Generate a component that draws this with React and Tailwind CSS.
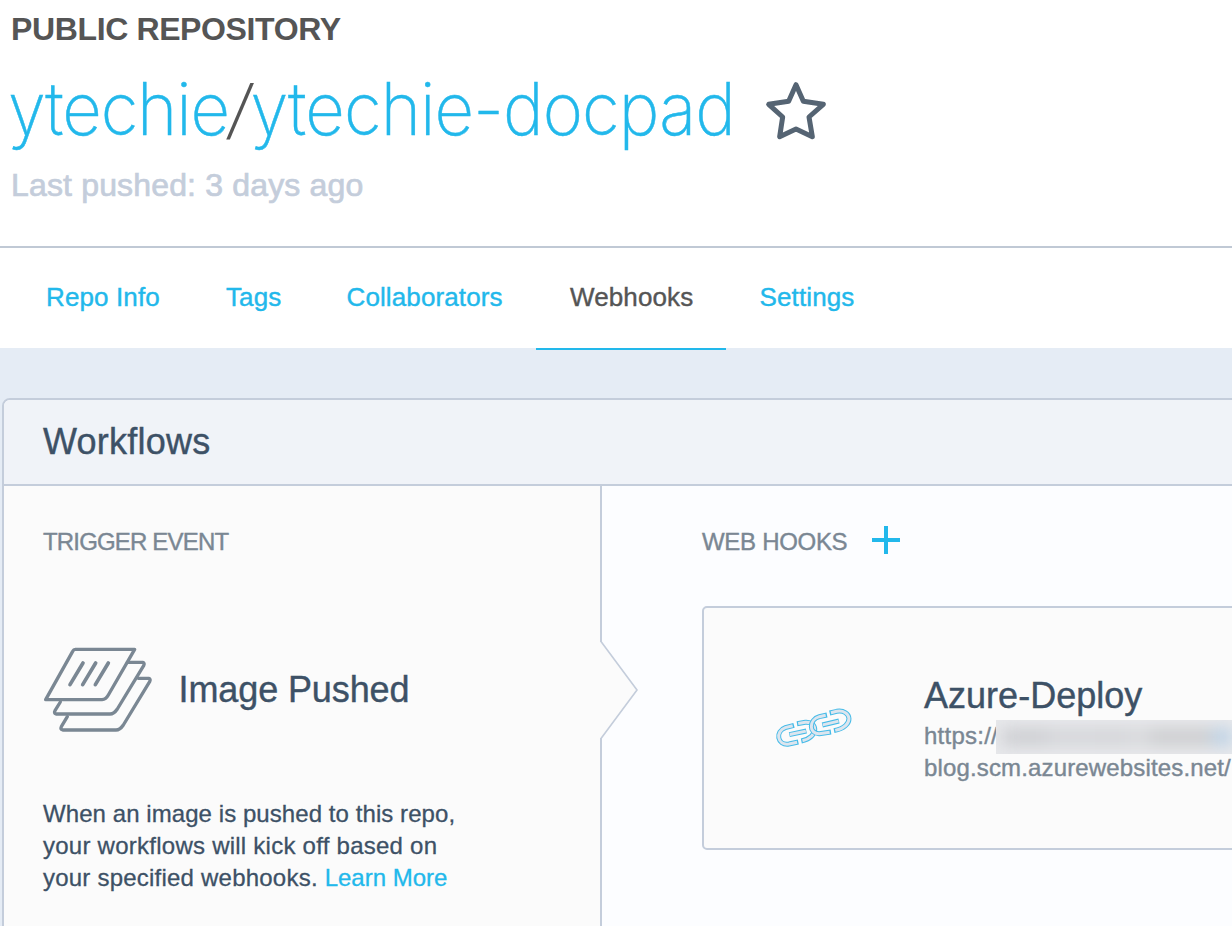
const tabs = [
  { label: "Repo Info", width: "w-[180px]" },
  { label: "Tags", width: "w-[120.5px]" },
  { label: "Collaborators", width: "w-[223px]" },
  { label: "Webhooks", width: "w-[190px]", active: true },
  { label: "Settings", width: "w-[162px]" },
];

function StarIcon() {
  return (
    <svg className="h-[62px] w-[62px] shrink-0" viewBox="0 0 186 186" fill="none" stroke="#556473" strokeWidth="15" strokeLinejoin="round">
      <path d="M93 17 L115 67 L175 76 L132 114 L142 173 L93 150 L44 173 L53 114 L11 76 L71 67 Z" />
    </svg>
  );
}

function ImageStackIcon() {
  return (
    <svg className="h-[86px] w-[110px] shrink-0" viewBox="39 411 330 258" fill="none" stroke="#7a8793" strokeWidth="10" strokeLinecap="round" strokeLinejoin="round">
      <path d="M136 418 H314 L235 555 Q228 568 216 569 H47 L128 424 Q131 418 136 418 Z" />
      <path d="M292 457 H338 Q345 459 341 467 L262 597 Q252 612 240 612 H78 Q71 610 75 602 L91 576" />
      <path d="M325 505 H356 Q363 507 359 515 L280 645 Q270 660 258 660 H98 Q90 658 94 650 L112 620" />
      <path d="M159 459 L120 524 M197 459 L158 524 M235 459 L196 524" strokeWidth="11" />
    </svg>
  );
}

const chainParts = [
  "M111 101 L136 97 C173 94 178 142 124 153",
  "M102 106 L76 113 C45 124 51 167 87 162 L115 156",
  "M88 134 L139 123",
  "M201 75 L178 80 C146 89 146 132 178 131 L213 126",
  "M187 105 L237 93",
  "M209 69 L230 64 C274 57 287 109 222 122",
];

function ChainIcon() {
  return (
    <svg className="h-[41px] w-[78px] shrink-0" viewBox="45 51 234 123" fill="none">
      {chainParts.map((d) => (
        <g key={d}>
          <path d={d} stroke="#45bbe8" strokeWidth="15" />
          <path d={d} stroke="#dde5ee" strokeWidth="9" pathLength="100" strokeDasharray="0 3 94 3" />
        </g>
      ))}
    </svg>
  );
}

export default function App() {
  return (
    <div className="flex h-[926px] w-full flex-col overflow-hidden bg-[#e5ecf5] font-['Liberation_Sans',Arial,sans-serif]">
      <header className="h-[248px] shrink-0 border-b-2 border-[#c0c9d5] bg-white pt-[11px] pl-[11px]">
        <div className="text-[32px]/[36px] font-bold tracking-[-0.37px] text-[#555]">PUBLIC REPOSITORY</div>
        <div className="mt-[18px] flex h-[90px] items-center">
          <h1 className="-ml-[3px] w-[757px] origin-left scale-x-[0.94] pb-[2px] font-['Inter',sans-serif] text-[73px]/[90px] font-[190] whitespace-nowrap text-[#22b8eb]">
            <a className="tracking-[-1.2px] [-webkit-text-stroke:0.5px_#22b8eb]">ytechie</a>
            <span className="-mr-[4px] -ml-[2px] inline-block -skew-x-[4deg] font-['Roboto',sans-serif] font-[300] text-[#555]">/</span>
            <a className="tracking-[-0.9px] [-webkit-text-stroke:0.5px_#22b8eb]">ytechie-docpad</a>
          </h1>
          <StarIcon />
        </div>
        <div className="mt-[10px] text-[32px]/[40px] tracking-[0.16px] text-[#c4cddb] [-webkit-text-stroke:0.7px_#c4cddb]">Last pushed: 3 days ago</div>
      </header>

      <nav className="flex h-[100px] shrink-0 bg-white pl-[12.5px] text-[26px]/[28px] tracking-[0.12px] whitespace-nowrap">
        {tabs.map((tab) => (
          <a key={tab.label} className={`${tab.width} flex items-center pb-[2px] ${tab.active ? "h-[102px] border-b-2 border-[#22b8eb] pl-[34px] text-[#555] [-webkit-text-stroke:0.4px_#555]" : "h-[100px] pl-[33.5px] text-[#22b8eb] [-webkit-text-stroke:0.4px_#22b8eb]"}`}>
            {tab.label}
          </a>
        ))}
      </nav>

      <main className="flex flex-1 pt-[50px] pl-[2px]">
        <section className="flex h-[600px] w-[1260px] shrink-0 flex-col overflow-hidden rounded-lg border-2 border-[#c4cddb] bg-[#fcfdff] text-[#3d5166]">
          <h2 className="flex h-[86px] shrink-0 items-center border-b-2 border-[#c4cddb] bg-[#f0f3f8] pl-[39px] text-[36px]/[40px] tracking-[0.25px] [-webkit-text-stroke:0.4px_#3d5166]">Workflows</h2>
          <div className="flex flex-1">
            <div className="relative w-[598px] shrink-0 border-r-2 border-[#c4cddb] bg-[#fbfbfb] pt-[42px] pl-[39px]">
              <h3 className="text-[24px]/[28px] tracking-[-0.83px] text-[#7a8793] [-webkit-text-stroke:0.4px_#7a8793]">TRIGGER EVENT</h3>
              <div className="mt-[91px] flex items-center">
                <ImageStackIcon />
                <span className="pl-[25.5px] text-[36px]/[40px] tracking-[-0.1px] [-webkit-text-stroke:0.4px_#3d5166]">Image Pushed</span>
              </div>
              <p className="mt-[65px] text-[24px]/[32px] whitespace-nowrap [-webkit-text-stroke:0.3px]">
                <span className="tracking-[0.07px]">When an image is pushed to this repo,</span>
                <br />
                <span className="tracking-[0.25px]">your workflows will kick off based on</span>
                <br />
                <span className="tracking-[0.22px]">your specified webhooks. </span>
                <a className="text-[#22b8eb]">Learn More</a>
              </p>
              <svg className="absolute top-[154px] left-[595px] h-[100px] w-[40px]" viewBox="0 0 40 100" fill="none">
                <path d="M0 2 H2 L38 50 L2 98 H0 Z" fill="#fbfbfb" />
                <path d="M2 1.5 L38 50 L2 98.5" stroke="#c4cddb" strokeWidth="1.6" />
              </svg>
            </div>
            <div className="flex-1 pt-[40px] pl-[100px]">
              <div className="flex h-7 items-center">
                <h3 className="w-[170px] pt-[3px] text-[24px]/[28px] tracking-[-0.3px] text-[#7a8793] [-webkit-text-stroke:0.4px_#7a8793]">WEB HOOKS</h3>
                <svg className="size-7" viewBox="0 0 28 28" fill="#22b8eb">
                  <path d="M12 0 H16 V12 H28 V16 H16 V28 H12 V16 H0 V12 H12 Z" />
                </svg>
              </div>
              <div className="mt-[52px] flex h-[244px] w-[600px] items-start rounded-[5px] border-2 border-[#c4cddb] bg-[#fbfbfb] pl-[71px]">
                <div className="pt-[99px]">
                  <ChainIcon />
                </div>
                <div className="pt-[66px] pl-[71px]">
                  <h4 className="text-[36px]/[44px] tracking-[0.02px] [-webkit-text-stroke:0.4px_#3d5166]">Azure-Deploy</h4>
                  <div className="pt-[2px] text-[24px]/[32px] text-[#7a8793] [-webkit-text-stroke:0.4px_#7a8793]">
                    <div className="flex h-[32px]">
                      <span className="w-[72px] tracking-[0.25px] whitespace-nowrap">https://</span>
                      <span className="relative h-[34px] w-[236px] overflow-hidden bg-[#e7e8eb]">
                        <span className="mt-[9px] ml-[6px] flex h-4 blur-[8px]">
                          <span className="w-[50px] bg-[#cbccd0]" />
                          <span className="w-[50px] bg-[#d3d4d8]" />
                          <span className="w-[36px] bg-[#d2d3d7]" />
                          <span className="w-[24px] bg-[#d6d7da]" />
                          <span className="w-[66px] bg-[#cacbcd]" />
                          <span className="w-[22px] bg-[#b9d0e6]" />
                        </span>
                      </span>
                    </div>
                    <div className="tracking-[0.15px]">blog.scm.azurewebsites.net/</div>
                  </div>
                </div>
              </div>
            </div>
          </div>
        </section>
      </main>
    </div>
  );
}
